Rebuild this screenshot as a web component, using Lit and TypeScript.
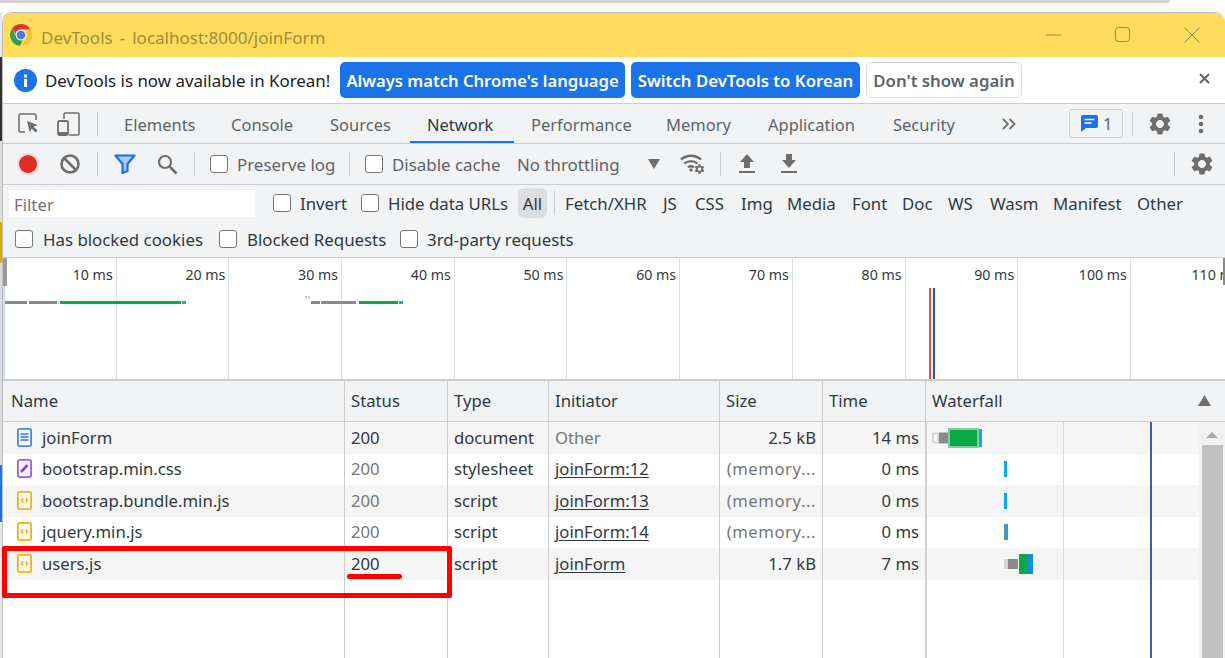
import { LitElement, html, css, svg } from "lit";
import { customElement } from "lit/decorators.js";

const GEAR = "M19.14 12.94c.04-.3.06-.61.06-.94 0-.32-.02-.64-.07-.94l2.03-1.58c.18-.14.23-.41.12-.61l-1.92-3.32c-.12-.22-.37-.29-.59-.22l-2.39.96c-.5-.38-1.03-.7-1.62-.94l-.36-2.54c-.04-.24-.24-.41-.48-.41h-3.84c-.24 0-.43.17-.47.41l-.36 2.54c-.59.24-1.13.57-1.62.94l-2.39-.96c-.22-.08-.47 0-.59.22L2.74 8.87c-.12.21-.08.47.12.61l2.03 1.58c-.05.3-.09.63-.09.94s.02.64.07.94l-2.03 1.58c-.18.14-.23.41-.12.61l1.92 3.32c.12.22.37.29.59.22l2.39-.96c.5.38 1.03.7 1.62.94l.36 2.54c.05.24.24.41.48.41h3.84c.24 0 .44-.17.47-.41l.36-2.54c.59-.24 1.13-.56 1.62-.94l2.39.96c.22.08.47 0 .59-.22l1.92-3.32c.12-.22.07-.47-.12-.61l-2.01-1.58zM12 15.6c-1.98 0-3.6-1.62-3.6-3.6s1.62-3.6 3.6-3.6 3.6 1.62 3.6 3.6-1.62 3.6-3.6 3.6z";

const gear = (s: number) => html`<svg width=${s} height=${s} viewBox="2 2 20 20"><path d=${GEAR} fill="#6e6e6e"></path></svg>`;

const chrome = html`<svg class="logo" width="22" height="22" viewBox="0 0 22 22">
  <path d="M11 0a11 11 0 0 1 9.530 5.500H11a5.500 5.500 0 0 0-5.200 3.700L2.200 4.600A11 11 0 0 1 11 0z" fill="#d93a2f"></path>
  <path d="M20.530 5.500A11 11 0 0 1 11.500 22l4.300-6.500A5.500 5.500 0 0 0 15.600 8z" fill="#fbc02d"></path>
  <path d="M2.200 4.600l4 7.200a5.500 5.500 0 0 0 6.500 4.400L10 22A11 11 0 0 1 2.200 4.600z" fill="#34a04c"></path>
  <circle cx="11" cy="11" r="5.400" fill="#f3f3f0"></circle><circle cx="11" cy="11" r="4.300" fill="#3f7ee8"></circle>
</svg>`;

const fileIcon = (kind: string) => {
  const col = kind === "doc" ? "#4285f4" : kind === "css" ? "#a855f7" : "#f5b400";
  const inner = kind === "doc"
    ? svg`<path d="M3.500 6h8M3.500 9h8M3.500 12h8" stroke="#2a73e8" stroke-width="1.600"></path>`
    : kind === "css"
    ? svg`<path d="M4 13l6.500-7" stroke="#9334e6" stroke-width="2.600"></path>`
    : svg`<path d="M6.300 7.500L4.500 9.500l1.800 2M8.700 7.500l1.800 2-1.800 2" stroke=${col} stroke-width="1.700" fill="none"></path>`;
  return html`<svg width="15" height="19" viewBox="0 0 15 19"><rect x=".9" y=".9" width="13.200" height="17.200" rx="1.800" fill="#fff" stroke=${col} stroke-width="1.800"></rect>${inner}</svg>`;
};

const ROWS = [
  { icon: "doc", name: "joinForm", status: "200", statusDark: true, type: "document", init: "Other", link: false, size: "2.5 kB", sizeGray: false, time: "14 ms" },
  { icon: "css", name: "bootstrap.min.css", status: "200", statusDark: false, type: "stylesheet", init: "joinForm:12", link: true, size: "(memory...", sizeGray: true, time: "0 ms" },
  { icon: "js", name: "bootstrap.bundle.min.js", status: "200", statusDark: false, type: "script", init: "joinForm:13", link: true, size: "(memory...", sizeGray: true, time: "0 ms" },
  { icon: "js", name: "jquery.min.js", status: "200", statusDark: false, type: "script", init: "joinForm:14", link: true, size: "(memory...", sizeGray: true, time: "0 ms" },
  { icon: "js", name: "users.js", status: "200", statusDark: true, type: "script", init: "joinForm", link: true, size: "1.7 kB", sizeGray: false, time: "7 ms" },
];

// x offset within the waterfall cell, width, height, colour, outline
const BARS: [number, number, number, string, string?][][] = [
  [[6, 7, 11, "#fff", "#d5d5d5"], [13, 9, 11, "#8a8a8a"], [22, 31, 20, "#0aa846", "#7ccf9a"], [53, 3, 18, "#12a8f5"]],
  [[78, 3, 16, "#06a9f5"]],
  [[78, 3, 16, "#06a9f5"]],
  [[78, 1, 16, "#8a8a8a"], [79, 3, 16, "#06a9f5"]],
  [[78, 4, 10, "#fff", "#d5d5d5"], [82, 10, 10, "#8a8a8a"], [93, 9, 20, "#0aa846"], [102, 5, 20, "#0d8fe8"]],
];

const TICKS = ["10 ms", "20 ms", "30 ms", "40 ms", "50 ms", "60 ms", "70 ms", "80 ms", "90 ms", "100 ms", "110 ms"];
const cb = html`<span class="cb"></span>`;
const sep = html`<span class="sep"></span>`;

@customElement("app-root")
export class AppRoot extends LitElement {
  static styles = css`
    :host { display: block; position: relative; width: 1225px; height: 658px; overflow: hidden; background: #fff;
      font-family: "Noto Sans", sans-serif; font-size: 16.9px; color: #303942; }
    * { box-sizing: border-box; }
    svg { display: block; }
    .top { width: 1170px; height: 3px; background: #d4d4d4; border-radius: 0 0 4px 0; }
    .page { display: flex; margin-top: 9px; height: 646px; }
    .strip { width: 2px; flex: none; display: flex; flex-direction: column; background: #e8e8e8; }
    .strip i { display: block; }
    .s0 { height: 45px; } .s1 { height: 84px; background: #333; } .s2 { height: 81px; background: #ddd; }
    .s3 { height: 41px; background: #e0a800; } .s4 { height: 202px; background: #ddd; }
    .s5 { height: 57px; background: #1a73e8; }
    .win { flex: 1; min-width: 0; display: flex; flex-direction: column; border-top: 1px solid #bdbdbd; border-left: 1px solid #bdbdbd;
      border-radius: 10px 10px 0 0; overflow: hidden; }
    .title { height: 44px; flex: none; background: #ffdc5c; display: grid; align-items: center;
      grid-template-columns: 7px 31px 1005px 69px 69px auto; color: #a08c3a; font-size: 17px; }
    .title .t { white-space: pre; padding-top: 4px; word-spacing: -.9px; }
    .logo { margin-top: -1px; }
    .info { height: 47px; flex: none; background: #fff; border-bottom: 1px solid #cbcdd1; display: grid; align-items: center;
      grid-template-columns: 11px 31px 295px 291px 235px 156px auto; }
    .info .msg { color: #202124; white-space: nowrap; padding-top: 1px; }
    .btn { height: 36px; border-radius: 5px; display: flex; align-items: center; justify-content: center; font-weight: 600; color: #fff;
      background: #1a73e8; font-size: 16.8px; white-space: nowrap; padding-top: 1px; }
    .b1 { width: 285px; font-size: 16.6px; } .b2 { width: 229px; }
    .b3 { width: 156px; background: #fff; color: #5f6368; border: 1px solid #dadce0; }
    .close { margin-left: 177px; margin-top: -3px; }
    .tabs { height: 40px; flex: none; background: #f1f3f4; border-bottom: 1px solid #cbcdd1; display: grid; align-items: center; padding-left: 15px;
      grid-template-columns: 39px 40px 27px 107px 99px 97px 104px 135px 102px 125px 109px 67px 63px 17px 49px auto; color: #5f6368; font-size: 16.5px; }
    .tab { position: relative; white-space: nowrap; height: 39px; line-height: 41px; }
    .tab.on { color: #303942; }
    .tab.on::after { content: ""; position: absolute; left: -17px; width: 104px; bottom: 0; height: 2px; background: #1a73e8; }
    .sep { display: block; width: 1px; height: 24px; background: #c8cacd; }
    .badge { width: 54px; height: 29px; border: 1px solid #cdd0d4; border-radius: 3px; display: flex; align-items: center; gap: 5px; padding-left: 11px; color: #5f6368; }
    .tool { height: 41px; flex: none; background: #f1f3f4; border-bottom: 1px solid #cbcdd1; display: grid; align-items: center; padding-left: 14px;
      grid-template-columns: 43px 37px 17px 43px 37px 16px 27px 112px 16px 27px 125px 131px 32px 40px 19px 42px 393px 17px auto; color: #5f6368; }
    .cb { display: block; width: 18px; height: 18px; border: 1.5px solid #757575; border-radius: 3px; background: #fff; }
    .nw { white-space: nowrap; }
    .filter { height: 73px; flex: none; background: #f1f3f4; border-bottom: 1px solid #cbcdd1; display: flex; flex-direction: column; }
    .f1 { height: 38px; display: grid; align-items: center; padding-left: 6px; padding-bottom: 1px; color: #303942; font-size: 16.8px;
      grid-template-columns: 264px 27px 61px 27px 130px 36px 11px 98px 32px 46px 46px 65px 50px 46px 42px 63px 84px auto; }
    .input { width: 246px; height: 27px; background: #fff; color: #757575; padding-left: 5px; line-height: 29px; }
    .chip { width: 29px; height: 30px; background: #dcdee1; border-radius: 6px; display: flex; align-items: center; justify-content: center; }
    .f2 { height: 35px; display: grid; align-items: center; padding-left: 12px; padding-bottom: 1px; font-size: 16.85px;
      grid-template-columns: 28px 176px 28px 153px 27px auto; }
    .over { height: 123px; flex: none; position: relative; background: #fff; border-bottom: 2px solid #cdcdcd; display: flex; overflow: hidden; padding-left: 1px; }
    .cell { flex: none; width: 112.7px; border-right: 1px solid #e0e0e0; text-align: right; font-size: 14.2px; padding: 7px 3px 0 0; white-space: nowrap; color: #303942; }
    .mk { position: absolute; display: block; }
    .table { flex: 1; min-height: 0; display: grid; overflow: hidden; font-size: 16.7px;
      grid-template-columns: 342px 103px 101px 171px 103px 103px 273px 1fr;
      grid-template-rows: 41px repeat(5, 31.5px) 1fr; }
    .h { background: #f1f3f4; border-right: 1px solid #cdcdcd; border-bottom: 1px solid #cdcdcd; display: flex; align-items: center; padding-left: 6px; padding-bottom: 2px; }
    .h.n { padding-left: 8px; }
    .h.w { grid-column: 7 / span 2; border-right: none; justify-content: space-between; padding-right: 14px; }
    .c { border-right: 1px solid #cdcdcd; display: flex; align-items: center; padding: 0 6px .6px; white-space: nowrap; overflow: hidden; }
    .c.z { background: #f5f5f5; }
    .c.nm { padding-left: 14px; gap: 10px; }
    .c.r { justify-content: flex-end; }
    .gray { color: #777; }
    .mem { letter-spacing: .55px; }
    .u { text-decoration: underline; text-underline-offset: 2px; }
    .wf { position: relative; display: block; padding: 0; grid-column: 7; }
    .wfz { background: #f5f5f5; }
    .bar { position: absolute; top: 50%; transform: translateY(-50%); }
    .lines { grid-column: 7; grid-row: 2 / span 6; position: relative; pointer-events: none; border-left: 1px solid #d5d5d5; }
    .l1 { position: absolute; left: 136px; top: 0; bottom: 0; width: 1px; background: #dcdcdc; }
    .l2 { position: absolute; left: 223px; top: 0; bottom: 0; width: 2px; background: #3a5fb0; }
    .scroll { grid-column: 8; grid-row: 2 / span 6; background: #f1f1f1; display: flex; flex-direction: column; align-items: center; padding-top: 10px; }
    .thumb { width: 21px; flex: 1; background: #c1c1c1; margin-top: 7px; }
    .arrow { width: 0; height: 0; border-left: 6px solid transparent; border-right: 6px solid transparent; border-bottom: 6px solid #a8a8a8; }
    .box { position: absolute; left: 2px; top: 546px; width: 450px; height: 52px; border: 5px solid #f00; border-radius: 2px; }
    .under { position: absolute; left: 347px; top: 574px; width: 55px; height: 5px; border-radius: 3px; background: #f00; }
  `;

  render() {
    const tabs = ["Elements", "Console", "Sources", "Network", "Performance", "Memory", "Application", "Security"];
    const types = ["Fetch/XHR", "JS", "CSS", "Img", "Media", "Font", "Doc", "WS", "Wasm", "Manifest", "Other"];
    const marks: [number, number, number, number, string][] = [
      [1, 43, 23, 3, "#8a8a8a"], [26, 43, 28, 3, "#8a8a8a"], [55, 43, 1, 3, "#cfcfcf"], [57, 43, 121, 3, "#0aa846"], [179, 43, 4, 3, "#12a8f5"],
      [302, 38, 2, 3, "#cfcfcf"], [305, 38, 2, 3, "#cfcfcf"], [308, 43, 9, 3, "#8a8a8a"], [318, 43, 35, 3, "#8a8a8a"], [356, 43, 39, 3, "#0aa846"], [396, 43, 4, 3, "#12a8f5"],
      [926, 30, 2, 91, "#e05050"], [930, 30, 2, 91, "#4040c0"],
      [0, 0, 4, 28, "#9a9a9a"], [0, 28, 2, 93, "#cfe0f5"], [1220, 0, 2, 27, "#8a8a8a"],
    ];
    return html`
      <div class="top"></div>
      <div class="page">
        <div class="strip"><i class="s0"></i><i class="s1"></i><i class="s2"></i><i class="s3"></i><i class="s4"></i><i class="s5"></i></div>
        <div class="win">
          <div class="title">
            <span></span>${chrome}
            <span class="t">DevTools  -  localhost:8000/joinForm</span>
            <svg width="16" height="16" viewBox="0 0 16 16"><path d="M0 8h15" stroke="#a08c3a" stroke-width="1"></path></svg>
            <svg width="16" height="16" viewBox="0 0 16 16"><rect x=".5" y=".5" width="14" height="14" rx="3" fill="none" stroke="#a08c3a"></rect></svg>
            <svg width="16" height="16" viewBox="0 0 16 16"><path d="M.5.5l15 15M15.500.5l-15 15" stroke="#a08c3a"></path></svg>
          </div>
          <div class="info">
            <span></span>
            <svg width="23" height="23" viewBox="0 0 23 23"><circle cx="11.500" cy="11.500" r="11.500" fill="#1a73e8"></circle><path d="M10 10h3v8h-3zM10 5.500h3v3h-3z" fill="#fff"></path></svg>
            <span class="msg">DevTools is now available in Korean!</span>
            <span class="btn b1">Always match Chrome's language</span>
            <span class="btn b2">Switch DevTools to Korean</span>
            <span class="btn b3">Don't show again</span>
            <svg class="close" width="11" height="11" viewBox="0 0 11 11"><path d="M1 1l9 9M10 1l-9 9" stroke="#5f6368" stroke-width="2"></path></svg>
          </div>
          <div class="tabs">
            <svg width="21" height="21" viewBox="0 0 21 21"><path d="M7 19H2.500A1.500 1.500 0 0 1 1 17.500V2.500A1.500 1.500 0 0 1 2.500 1h14A1.500 1.500 0 0 1 18 2.500V7" fill="none" stroke="#6e6e6e" stroke-width="1.600"></path><path d="M9 8l11 4-4.500 1.500 4 4-2 2-4-4L12 20z" fill="#6e6e6e"></path></svg>
            <svg width="23" height="24" viewBox="0 0 23 24"><path d="M7 7V2.500A1.500 1.500 0 0 1 8.500 1h12A1.500 1.500 0 0 1 22 2.500v19a1.500 1.500 0 0 1-1.500 1.500H12" fill="none" stroke="#6e6e6e" stroke-width="1.600"></path><rect x="1" y="9" width="10" height="14" rx="1.500" fill="none" stroke="#6e6e6e" stroke-width="1.800"></rect><rect x="1" y="20" width="10" height="3" fill="#6e6e6e"></rect></svg>
            ${sep}
            ${tabs.map((t) => html`<span class="tab ${t === "Network" ? "on" : ""}">${t}</span>`)}
            <svg width="14" height="12" viewBox="0 0 14 12"><path d="M1 1l5 5-5 5M7.500 1l5 5-5 5" fill="none" stroke="#6e6e6e" stroke-width="1.800"></path></svg>
            <span class="badge"><svg width="17" height="17" viewBox="0 0 17 17"><path d="M2 0h13a2 2 0 0 1 2 2v9a2 2 0 0 1-2 2H5l-5 4V2a2 2 0 0 1 2-2z" fill="#1a73e8"></path><path d="M3.500 4.500h10M3.500 8h7" stroke="#fff" stroke-width="1.500"></path></svg>1</span>
            ${sep}
            ${gear(22)}
            <svg width="6" height="20" viewBox="0 0 6 20"><circle cx="3" cy="3" r="2.300" fill="#6e6e6e"></circle><circle cx="3" cy="10" r="2.300" fill="#6e6e6e"></circle><circle cx="3" cy="17" r="2.300" fill="#6e6e6e"></circle></svg>
          </div>
          <div class="tool">
            <svg width="22" height="22" viewBox="0 0 22 22"><circle cx="11" cy="11" r="11" fill="#f0d8d8"></circle><circle cx="11" cy="11" r="9" fill="#dc2d26"></circle></svg>
            <svg width="20" height="20" viewBox="0 0 20 20"><circle cx="10" cy="10" r="8.500" fill="none" stroke="#6e6e6e" stroke-width="2.600"></circle><path d="M4 4l12 12" stroke="#6e6e6e" stroke-width="2.600"></path></svg>
            ${sep}
            <svg width="22" height="20" viewBox="0 0 22 20"><path d="M1.500 1.500h19L13.500 10v7l-5 2v-9z" fill="#a8c7fa" stroke="#1a73e8" stroke-width="2.200" stroke-linejoin="round"></path></svg>
            <svg width="21" height="21" viewBox="0 0 21 21"><circle cx="8" cy="8" r="6" fill="none" stroke="#6e6e6e" stroke-width="2.200"></circle><path d="M12.500 12.500l7 7" stroke="#6e6e6e" stroke-width="2.600"></path></svg>
            ${sep}${cb}<span class="nw">Preserve log</span>${sep}${cb}<span class="nw">Disable cache</span>
            <span class="nw">No throttling</span>
            <svg width="12" height="10" viewBox="0 0 12 10"><path d="M0 0h12L6 10z" fill="#6e6e6e"></path></svg>
            <svg width="26" height="22" viewBox="0 0 26 22"><path d="M1 6.500a15 15 0 0 1 20 0M4.500 10.500a10 10 0 0 1 13 0M8 14.300a5 5 0 0 1 6 0" fill="none" stroke="#6e6e6e" stroke-width="2.400"></path><circle cx="11" cy="17" r="1.700" fill="#6e6e6e"></circle><g transform="translate(13.500 10) scale(.5)"><path d=${GEAR} fill="#6e6e6e"></path></g></svg>
            ${sep}
            <svg width="16" height="20" viewBox="0 0 16 20"><path d="M8 0l7 8h-4v6H5V8H1zM0 17h16v2H0z" fill="#6e6e6e"></path></svg>
            <svg width="16" height="20" viewBox="0 0 16 20"><path d="M5 0h6v6h4l-7 8-7-8h4zM0 17h16v2H0z" fill="#6e6e6e"></path></svg>
            ${sep}
            ${gear(22)}
          </div>
          <div class="filter">
            <div class="f1">
              <span class="input">Filter</span>
              ${cb}<span class="nw">Invert</span>${cb}<span class="nw">Hide data URLs</span>
              <span class="chip">All</span>${sep}
              ${types.map((t) => html`<span class="nw">${t}</span>`)}
            </div>
            <div class="f2">
              ${cb}<span class="nw">Has blocked cookies</span>${cb}<span class="nw">Blocked Requests</span>${cb}<span class="nw">3rd-party requests</span>
            </div>
          </div>
          <div class="over">
            ${TICKS.map((t) => html`<div class="cell">${t}</div>`)}
            ${marks.map((m) => html`<i class="mk" style="left:${m[0]}px;top:${m[1]}px;width:${m[2]}px;height:${m[3]}px;background:${m[4]}"></i>`)}
          </div>
          <div class="table">
            <div class="h n">Name</div><div class="h">Status</div><div class="h">Type</div><div class="h">Initiator</div><div class="h">Size</div><div class="h">Time</div>
            <div class="h w">Waterfall<svg width="13" height="11" viewBox="0 0 13 11"><path d="M6.500 0L13 11H0z" fill="#6e6e6e"></path></svg></div>
            ${ROWS.map((r, i) => {
              const z = i % 2 === 0 ? "z" : "";
              const row = `grid-row:${i + 2}`;
              return html`
                <div class="c nm ${z}" style=${row}>${fileIcon(r.icon)}<span>${r.name}</span></div>
                <div class="c ${z} ${r.statusDark ? "" : "gray"}" style=${row}>${r.status}</div>
                <div class="c ${z}" style=${row}>${r.type}</div>
                <div class="c ${z} ${r.link ? "" : "gray"}" style=${row}><span class=${r.link ? "u" : ""}>${r.init}</span></div>
                <div class="c r ${z} ${r.sizeGray ? "gray mem" : ""}" style=${row}>${r.size}</div>
                <div class="c r ${z}" style=${row}>${r.time}</div>
                <div class="wf ${i % 2 === 0 ? "wfz" : ""}" style=${row}>
                  ${BARS[i].map((b) => html`<i class="bar" style="left:${b[0]}px;width:${b[1]}px;height:${b[2]}px;background:${b[3]};${b[4] ? `border:2px solid ${b[4]}` : ""}"></i>`)}
                </div>`;
            })}
            ${[0, 1, 2, 3, 4, 5].map(() => html`<div class="c" style="grid-row:7"></div>`)}
            <div class="lines"><i class="l1"></i><i class="l2"></i></div>
            <div class="scroll"><i class="arrow"></i><i class="thumb"></i></div>
          </div>
        </div>
      </div>
      <div class="box"></div>
      <div class="under"></div>
    `;
  }
}
